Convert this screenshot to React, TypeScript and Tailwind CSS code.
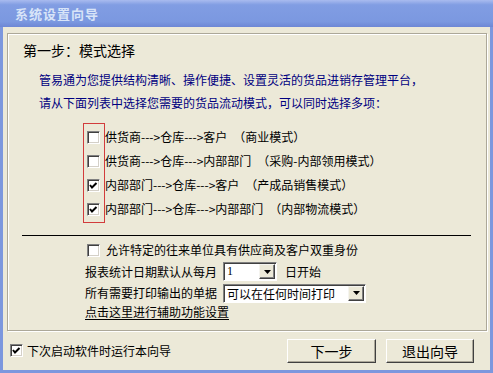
import React from "react";

const modes = [
  { text: "供货商--->仓库--->客户", note: "（商业模式）", checked: false },
  { text: "供货商--->仓库--->内部部门", note: "（采购-内部领用模式）", checked: false },
  { text: "内部部门--->仓库--->客户", note: "（产成品销售模式）", checked: true },
  { text: "内部部门--->仓库--->内部部门", note: "（内部物流模式）", checked: true },
];

const CheckBox = ({ checked }: { checked: boolean }) => (
  <span className="w-[13px] h-[13px] shrink-0 bg-white border border-t-[#808080] border-l-[#808080] border-r-white border-b-white shadow-[inset_1px_1px_0_#404040,inset_-1px_-1px_0_#d4d0c8] flex items-center justify-center">
    {checked && (
      <svg width="11" height="11" viewBox="0 0 11 11">
        <polyline points="2,5 4,7.5 8.5,3" fill="none" stroke="#000" strokeWidth="2" />
      </svg>
    )}
  </span>
);

const DropArrow = () => (
  <span className="w-[16px] h-full shrink-0 bg-[#ece9d8] border border-t-[#f5f4ef] border-l-[#f5f4ef] border-r-[#404040] border-b-[#404040] shadow-[inset_-1px_-1px_0_#808080] flex items-center justify-center">
    <svg width="7" height="4" viewBox="0 0 7 4">
      <polygon points="0,0 7,0 3.5,4" fill="#000" />
    </svg>
  </span>
);

const Select = ({ value, width, serif }: { value: string; width: string; serif?: boolean }) => (
  <div
    className={`${width} h-[19px] bg-white border border-t-[#808080] border-l-[#808080] border-r-white border-b-white shadow-[inset_1px_1px_0_#404040] flex items-stretch p-[1px]`}
  >
    <span
      className={`flex-1 pl-[2px] text-[12px] leading-[15px] ${serif ? "font-['Liberation_Serif',serif]" : ""}`}
    >
      {value}
    </span>
    <DropArrow />
  </div>
);

const XpButton = ({ label, width }: { label: string; width: string }) => (
  <button
    className={`${width} h-[24px] bg-[#ece9d8] border border-t-white border-l-white border-r-[#404040] border-b-[#404040] shadow-[inset_-1px_-1px_0_#aca899] text-[14px] leading-[20px] text-black`}
  >
    {label}
  </button>
);

export default function App() {
  return (
    <div className="w-[493px] h-[373px] flex flex-col bg-[#7c97de] font-['Noto_Sans_CJK_SC',sans-serif] text-black select-none">
      <div className="h-[27px] shrink-0 flex items-center pl-[15px] bg-[linear-gradient(to_bottom,#a9bbef_0%,#819de3_18%,#7b98e0_80%,#6d87d5_100%)]">
        <span className="text-[13px] font-bold text-[#d8e4f8] tracking-[1px]">系统设置向导</span>
      </div>

      <div className="flex-1 mx-[3px] mb-[3px] bg-[#ece9d8] flex flex-col">
        {/* group box */}
        <div className="mt-[6px] ml-[4px] mr-[3px] h-[298px] border border-[#aca899] shadow-[inset_1px_1px_0_#fff,1px_1px_0_#fff] flex flex-col">
          <div className="mt-[8px] pl-[15px] text-[14px] leading-[16px]">第一步：模式选择</div>

          <div className="mt-[10px] pl-[31px] text-[12px] leading-[23px] text-[#000080]">
            <div>管易通为您提供结构清晰、操作便捷、设置灵活的货品进销存管理平台，</div>
            <div>请从下面列表中选择您需要的货品流动模式，可以同时选择多项：</div>
          </div>

          <div className="mt-[9px] ml-[75px] flex text-[12px]">
            <div className="w-[22px] border border-[#d23c3c] py-[1px] flex flex-col">
              {modes.map((m) => (
                <div key={m.text} className="h-[24px] flex items-center pl-[3px]">
                  <CheckBox checked={m.checked} />
                </div>
              ))}
            </div>
            <div className="pt-[2px] flex flex-col">
              {modes.map((m) => (
                <div key={m.text} className="h-[24px] flex items-center whitespace-pre">
                  <span>{m.text}</span>
                  <span className="ml-[6px]">{m.note}</span>
                </div>
              ))}
            </div>
          </div>

          <div className="mt-[12px] ml-[14px] w-[449px] h-px bg-black" />

          <div className="pl-[77px] text-[12px] flex flex-col">
            <div className="mt-[5px] h-[18px] flex items-center gap-[6px] pl-[2px]">
              <CheckBox checked={false} />
              <span>允许特定的往来单位具有供应商及客户双重身份</span>
            </div>
            <div className="mt-[3px] h-[19px] flex items-center">
              <span>报表统计日期默认从每月</span>
              <span className="ml-[6px]">
                <Select value="1" width="w-[54px]" serif />
              </span>
              <span className="ml-[8px]">日开始</span>
            </div>
            <div className="mt-[2px] h-[20px] flex items-center">
              <span>所有需要打印输出的单据</span>
              <span className="ml-[6px]">
                <Select value="可以在任何时间打印" width="w-[143px]" />
              </span>
            </div>
            <div className="h-[18px] flex items-center">
              <span className="underline underline-offset-2">点击这里进行辅助功能设置</span>
            </div>
          </div>
        </div>

        <div className="flex-1 flex items-center pl-[7px] pr-[16px] text-[12px]">
          <CheckBox checked />
          <span className="ml-[4px]">下次启动软件时运行本向导</span>
          <div className="ml-auto flex gap-[10px]">
            <XpButton label="下一步" width="w-[89px]" />
            <XpButton label="退出向导" width="w-[88px]" />
          </div>
        </div>
      </div>
    </div>
  );
}
